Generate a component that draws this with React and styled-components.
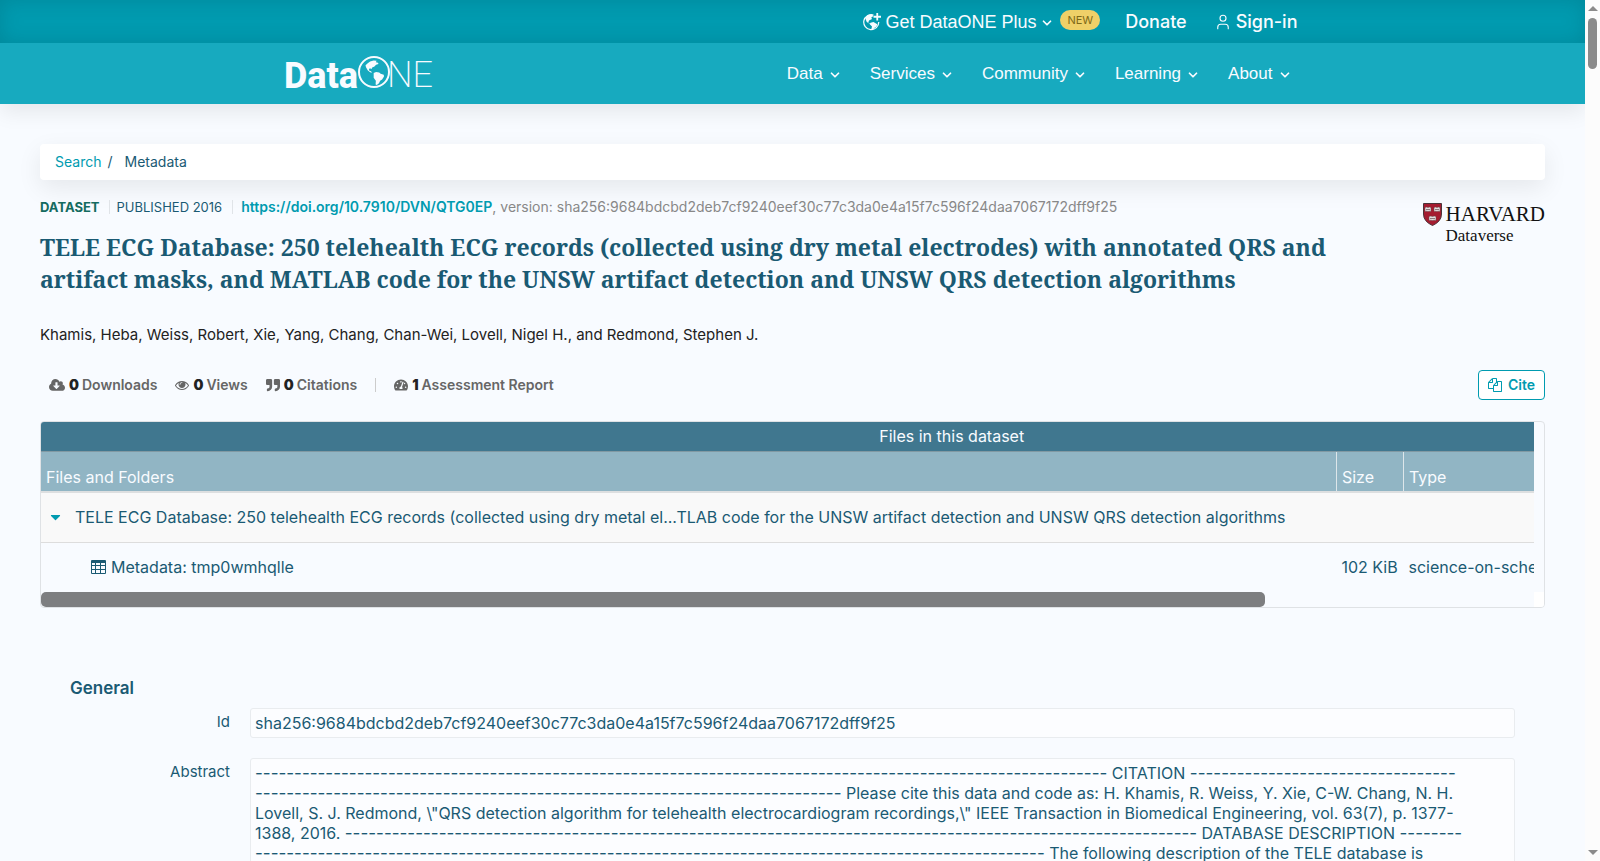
import React from "react";
import styled, { createGlobalStyle } from "styled-components";
import { ChevronDown, User } from "lucide-react";
import { FaCaretDown, FaQuoteRight, FaTachometerAlt } from "react-icons/fa";

const DASHES = "-".repeat(109);

const menus = ["Data", "Services", "Community", "Learning", "About"];

const Continents = () => (
  <>
    <path d="M6.2 4.6 8.4 3l3-1 2.4.3-.6 1.2 1.8.4.4 1.2-2 .6-1.6 1.6-1.4.4-.8 1.4-1.4-.6-.8 1 .4 1.2 1.4.4.8 1.2-1.6-.4-2-1.6-1.4-2.6-.4-1.6z" />
    <path d="M11.4 12.4l2-.8 2.6.4 1.2 1.2 2.6.8.2 1.4-1.6 2.6-1.6 1-1 2-1.8 1.4-1-.4.2-3-1.8-2.6z" />
  </>
);

const Logo = () => (
  <LogoSvg viewBox="0 0 150 36" role="img" aria-label="DataONE">
    <LogoData x="-2" y="34">Data</LogoData>
    <circle cx="88" cy="18" r="15" fill="none" stroke="currentColor" strokeWidth="2" />
    <g transform="translate(74 4) scale(1.2)">
      <Continents />
    </g>
    <LogoNe x="101" y="33">NE</LogoNe>
  </LogoSvg>
);

const GlobePlus = () => (
  <svg width="18" height="18" viewBox="0 0 24 24" fill="currentColor" aria-hidden="true">
    <path
      d="M14 2.6A10 10 0 1 0 21 12"
      fill="none"
      stroke="currentColor"
      strokeWidth="1.600"
    />
    <path d="M3 7l3-4 6-1 2 2-3 2 1 2-4 2-1 3 3 1v1L5 12z" />
    <path d="M10 13l4-1 5 3-1 3-3 2-2 3-2-1 1-4-3-3z" />
    <path d="M19 0v10M14 5h10" stroke="currentColor" strokeWidth="2.4" />
  </svg>
);

const CloudIcon = () => (
  <svg width="16" height="15" viewBox="-64 0 1920 1792" fill="currentColor" aria-hidden="true">
    <path d="M1216 928q0-14-9-23t-23-9h-224v-352q0-13-9.5-22.5t-22.5-9.5h-192q-13 0-22.5 9.5t-9.5 22.5v352h-224q-13 0-22.5 9.5t-9.5 22.5q0 14 9 23l352 352q9 9 23 9t23-9l351-351q10-12 10-24zm640 224q0 159-112.5 271.5t-271.5 112.5h-1088q-185 0-316.5-131.5t-131.5-316.5q0-130 70-240t188-165q-2-30-2-43 0-212 150-362t362-150q156 0 285.5 87t188.5 231q71-62 166-62 106 0 181 75t75 181q0 76-41 138 130 31 213.5 135.5t83.5 238.5z" />
  </svg>
);

const EyeIcon = () => (
  <svg width="14" height="14" viewBox="0 0 1792 1792" fill="currentColor" aria-hidden="true">
    <path d="M1664 960q-152-236-381-353 61 104 61 225 0 185-131.5 316.5t-316.5 131.5-316.5-131.5-131.5-316.5q0-121 61-225-229 117-381 353 133 205 333.5 326.5t434.5 121.5 434.5-121.5 333.5-326.5zm-720-384q0-20-14-34t-34-14q-125 0-214.5 89.5t-89.5 214.5q0 20 14 34t34 14 34-14 14-34q0-86 61-147t147-61q20 0 34-14t14-34zm848 384q0 34-20 69-140 230-376.5 368.5t-499.5 138.5-499.5-139-376.5-368q-20-35-20-69t20-69q140-229 376.5-368t499.5-139 499.5 139 376.5 368q20 35 20 69z" />
  </svg>
);

const FilesIcon = () => (
  <svg width="14" height="14" viewBox="0 0 1792 1792" fill="currentColor" aria-hidden="true">
    <path d="M1696 384q40 0 68 28t28 68v1216q0 40-28 68t-68 28h-960q-40 0-68-28t-28-68v-288h-544q-40 0-68-28t-28-68v-672q0-40 20-88t48-76l408-408q28-28 76-48t88-20h416q40 0 68 28t28 68v328q68-40 128-40h416zm-544 213l-299 299h299v-299zm-640-384l-299 299h299v-299zm196 647l316-316v-416h-384v416q0 40-28 68t-68 28h-416v640h512v-256q0-40 20-88t48-76zm956 804v-1152h-384v416q0 40-28 68t-68 28h-416v640h896z" />
  </svg>
);

const TableIcon = () => (
  <svg width="15" height="14" viewBox="0 0 15 14" fill="currentColor" aria-hidden="true">
    <path
      fillRule="evenodd"
      d="M1 0h13q1 0 1 1v12q0 1-1 1H1q-1 0-1-1V1q0-1 1-1zM1 3v2h3V3zM5 3v2h4V3zM10 3v2h4V3zM1 6v3h3V6zM5 6v3h4V6zM10 6v3h4V6zM1 10v3h3v-3zM5 10v3h4v-3zM10 10v3h4v-3z"
    />
  </svg>
);

const Shield = () => (
  <svg width="19" height="23" viewBox="0 0 19 23" aria-hidden="true">
    <path d="M.5.5h18V11q0 7.500-9 11.500Q.5 18.500.5 11z" fill="#a51c30" stroke="#4b3338" />
    <g fill="#e6dfe0" stroke="#62484c" strokeWidth=".5">
      <path d="M2 4.500q1.500-.8 3 0 1.500-.8 3 0v4q-1.500-.6-3 0-1.500-.6-3 0z" />
      <path d="M11 4.500q1.500-.8 3 0 1.500-.8 3 0v4q-1.500-.6-3 0-1.500-.6-3 0z" />
      <path d="M6 13.500q1.700-.8 3.500 0 1.700-.8 3.500 0v4q-1.800-.6-3.500 0-1.800-.6-3.500 0z" />
    </g>
    <path d="M3 6.500h4M12 6.500h4M7 15.500h5" stroke="#8d7c7f" />
  </svg>
);

const App = () => {
  return (
    <>
      <GlobalStyle />
      <Shell>
        <Page>
          <Header>
            <TopBar>
              <Container $end>
                <PlusButton type="button">
                  <GlobePlus />
                  Get DataONE Plus
                  <ChevronDown size={14} strokeWidth={3} />
                </PlusButton>
                <NewBadge>NEW</NewBadge>
                <TopLink href="#donate">Donate</TopLink>
                <TopLink href="#signin">
                  <User size={18} strokeWidth={1.500} />
                  Sign-in
                </TopLink>
              </Container>
            </TopBar>
            <NavBar>
              <Container>
                <LogoLink href="#home">
                  <Logo />
                </LogoLink>
                <Nav>
                  {menus.map((name) => (
                    <NavButton type="button" key={name}>
                      {name}
                      <ChevronDown size={14} strokeWidth={3} />
                    </NavButton>
                  ))}
                </Nav>
              </Container>
            </NavBar>
          </Header>

          <Main>
            <Breadcrumb aria-label="Breadcrumb">
              <Link href="#search">Search</Link>
              <span>/</span>
              <Crumb>Metadata</Crumb>
            </Breadcrumb>

            <Intro>
              <IntroText>
                <MetaLine>
                  <Kind>DATASET</Kind>
                  <Published>PUBLISHED 2016</Published>
                  <Identifier>
                    <Doi href="#doi">https://doi.org/10.7910/DVN/QTG0EP</Doi>, version:
                    sha256:9684bdcbd2deb7cf9240eef30c77c3da0e4a15f7c596f24daa7067172dff9f25
                  </Identifier>
                </MetaLine>
                <Title>
                  TELE ECG Database: 250 telehealth ECG records (collected using dry metal
                  electrodes) with annotated QRS and artifact masks, and MATLAB code for the
                  UNSW artifact detection and UNSW QRS detection algorithms
                </Title>
              </IntroText>
              <Harvard href="#harvard">
                <Shield />
                <HarvardName>
                  HARVARD
                  <Dataverse>Dataverse</Dataverse>
                </HarvardName>
              </Harvard>
            </Intro>

            <Authors>
              Khamis, Heba, Weiss, Robert, Xie, Yang, Chang, Chan-Wei, Lovell, Nigel H., and
              Redmond, Stephen J.
            </Authors>

            <Controls>
              <Stats>
                <Stat>
                  <CloudIcon />
                  <Count>0</Count>Downloads
                </Stat>
                <Stat>
                  <EyeIcon />
                  <Count>0</Count>Views
                </Stat>
                <Stat>
                  <FaQuoteRight />
                  <Count>0</Count>Citations
                </Stat>
                <Divider />
                <Stat>
                  <FaTachometerAlt />
                  <Count>1</Count>Assessment Report
                </Stat>
              </Stats>
              <CiteButton type="button">
                <FilesIcon />
                Cite
              </CiteButton>
            </Controls>

            <FilesBox>
              <FilesScroll>
                <FilesTable>
                  <colgroup>
                    <col />
                    <SizeCol />
                    <TypeCol />
                  </colgroup>
                  <thead>
                    <tr>
                      <Caption colSpan={3}>Files in this dataset</Caption>
                    </tr>
                    <tr>
                      <HeadCell>Files and Folders</HeadCell>
                      <HeadCell>Size</HeadCell>
                      <HeadCell>Type</HeadCell>
                    </tr>
                  </thead>
                  <tbody>
                    <FileRow $folder>
                      <td>
                        <FileName>
                          <Toggle type="button" aria-label="Collapse folder">
                            <FaCaretDown />
                          </Toggle>
                          TELE ECG Database: 250 telehealth ECG records (collected using dry metal
                          el...TLAB code for the UNSW artifact detection and UNSW QRS detection
                          algorithms
                        </FileName>
                      </td>
                      <td />
                      <td />
                    </FileRow>
                    <FileRow>
                      <td>
                        <FileName $nested>
                          <TableIcon />
                          Metadata: tmp0wmhqlle
                        </FileName>
                      </td>
                      <td>102 KiB</td>
                      <td>science-on-schema.org</td>
                    </FileRow>
                  </tbody>
                </FilesTable>
              </FilesScroll>
              <Track>
                <TrackThumb />
              </Track>
            </FilesBox>

            <Section>
              <SectionTitle>General</SectionTitle>
              <Fields>
                <dt>Id</dt>
                <Value>sha256:9684bdcbd2deb7cf9240eef30c77c3da0e4a15f7c596f24daa7067172dff9f25</Value>
                <dt>Abstract</dt>
                <Value>
                  <Line>
                    <Rule>{DASHES}</Rule> CITATION <Rule>{DASHES.slice(0, 34)}</Rule>
                  </Line>
                  <Line>
                    <Rule>{DASHES.slice(34)}</Rule> Please cite this data and code as: H. Khamis,
                    R. Weiss, Y. Xie, C-W. Chang, N. H.
                  </Line>
                  <Line>
                    Lovell, S. J. Redmond, \"QRS detection algorithm for telehealth
                    electrocardiogram recordings,\" IEEE Transaction in Biomedical Engineering,
                    vol. 63(7), p. 1377-
                  </Line>
                  <Line>
                    1388, 2016. <Rule>{DASHES}</Rule> DATABASE DESCRIPTION{" "}
                    <Rule>{DASHES.slice(0, 8)}</Rule>
                  </Line>
                  <Line>
                    <Rule>{DASHES.slice(8)}</Rule> The following description of the TELE database
                    is
                  </Line>
                </Value>
              </Fields>
            </Section>
          </Main>
        </Page>

        <PageScroll aria-hidden="true">
          <Arrow $up />
          <PageThumb />
          <Arrow />
        </PageScroll>
      </Shell>
    </>
  );
};

export default App;

const GlobalStyle = createGlobalStyle`
  * {
    box-sizing: border-box;
  }

  body {
    margin: 0;
    background: #f8fbff;
    color: #1a5a73;
    font: 16px/20px Inter, sans-serif;
  }

  button {
    padding: 0;
    border: none;
    background: none;
    color: inherit;
    font: inherit;
    cursor: pointer;
  }

  a {
    text-decoration: none;
  }
`;

const Shell = styled.div`
  display: flex;
  height: 100vh;
  overflow: hidden;
`;

const Page = styled.div`
  flex: 1;
  min-width: 0;
  overflow: hidden;
`;

const Header = styled.header`
  color: #f8fbff;
  box-shadow: 0 8px 20px rgba(0, 0, 0, 0.08);
`;

const TopBar = styled.div`
  display: flex;
  height: 43px;
  background: #009bb0;
  box-shadow: inset 0 0 20px rgba(0, 60, 70, 0.2);
`;

const NavBar = styled.div`
  display: flex;
  height: 61px;
  background: #17aabf;
`;

const Container = styled.div`
  display: flex;
  align-items: center;
  justify-content: ${(props) => (props.$end ? "flex-end" : "space-between")};
  width: 100%;
  max-width: 1014px;
  margin: 0 auto;
  padding-right: 2px;
`;

const PlusButton = styled.button`
  display: flex;
  align-items: center;
  gap: 4px;
  font: 18px/20px "Liberation Sans", sans-serif;

  svg:last-child {
    margin-top: 3px;
  }
`;

const NewBadge = styled.span`
  margin: 0 25px 4px 6px;
  padding: 0 7px;
  border-radius: 10px;
  background: #efd068;
  color: #7d6816;
  font-size: 11px;
`;

const TopLink = styled.a`
  display: flex;
  align-items: center;
  gap: 4px;
  color: inherit;
  font-size: 18px;
  font-weight: 500;

  & + & {
    margin-left: 27px;
  }
`;

const LogoLink = styled.a`
  display: flex;
  margin-bottom: 4px;
  color: #f8fbff;
`;

const LogoSvg = styled.svg`
  width: 150px;
  height: 36px;
  fill: currentColor;
  overflow: visible;
`;

const LogoData = styled.text`
  font: 800 36px Roboto, sans-serif;
`;

const LogoNe = styled.text`
  font: 200 36px Roboto, sans-serif;
`;

const Nav = styled.nav`
  display: flex;
  gap: 28px;
  padding-right: 6px;
`;

const NavButton = styled.button`
  display: flex;
  align-items: center;
  gap: 5px;
  font: 17px/20px "Liberation Sans", sans-serif;

  svg {
    margin-top: 3px;
  }
`;

const Main = styled.main`
  padding: 40px;
`;

const Breadcrumb = styled.nav`
  display: flex;
  gap: 6px;
  padding: 8px 15px;
  border-radius: 4px;
  background: #fff;
  box-shadow: 0 8px 24px rgba(0, 0, 0, 0.08);
  font-size: 14px;
`;

const Link = styled.a`
  color: #009bb0;
`;

const Crumb = styled.span`
  margin-left: 6px;
`;

const Intro = styled.div`
  display: flex;
  gap: 40px;
  justify-content: space-between;
  padding-top: 17px;
`;

const IntroText = styled.div`
  flex: 1;
`;

const MetaLine = styled.div`
  display: flex;
  color: #888;
  font-size: 13px;
`;

const Kind = styled.span`
  padding-right: 9px;
  color: #146b60;
  font-weight: 700;
`;

const Published = styled.span`
  margin: 3px 8px 3px 0;
  padding: 0 10px 0 7px;
  border: solid #e0e4e8;
  border-width: 0 1px;
  color: #1a5a73;
  line-height: 14px;
`;

const Identifier = styled.span`
  font-size: 14px;
`;

const Doi = styled.a`
  color: #009bb0;
  font-weight: 600;
`;

const Title = styled.h1`
  margin: 14px 0 0;
  font: 700 23px/32px "Noto Serif", "DejaVu Serif", serif;
`;

const Harvard = styled.a`
  display: flex;
  gap: 4px;
  padding-top: 6px;
  color: #111;
  font-family: "Liberation Serif", serif;
`;

const HarvardName = styled.span`
  display: flex;
  flex-direction: column;
  font-size: 21px;
  font-weight: 500;
  line-height: 22px;
`;

const Dataverse = styled.span`
  font-size: 17px;
`;

const Authors = styled.p`
  margin: 30px 0 25px;
  color: #222;
  font-size: 15px;
`;

const Controls = styled.div`
  display: flex;
  align-items: center;
  justify-content: space-between;
`;

const Stats = styled.div`
  display: flex;
  align-items: center;
  gap: 18px;
  padding-left: 9px;
`;

const Stat = styled.span`
  display: flex;
  align-items: center;
  color: #666;
  font-size: 14px;
  font-weight: 600;
`;

const Count = styled.b`
  margin: 0 3px 0 4px;
  color: #222;
`;

const Divider = styled.span`
  width: 1px;
  height: 14px;
  background: #ccc;
`;

const CiteButton = styled.button`
  display: flex;
  align-items: center;
  gap: 6px;
  height: 30px;
  padding: 0 9px;
  border: 1px solid #009bb0;
  border-radius: 4px;
  background: #fff;
  color: #009bb0;
  font-size: 14px;
  font-weight: 600;
`;

const FilesBox = styled.div`
  margin-top: 21px;
  padding-right: 10px;
  overflow: hidden;
  border: 1px solid #dfe2e5;
  border-radius: 4px;
`;

const FilesScroll = styled.div`
  overflow: hidden;
`;

const FilesTable = styled.table`
  width: 122%;
  table-layout: fixed;
  border-collapse: collapse;
  white-space: nowrap;

  td {
    height: 50px;
    padding: 0 5px;
  }
`;

const SizeCol = styled.col`
  width: 67px;
`;

const TypeCol = styled.col`
  width: 459px;
`;

const Caption = styled.th`
  height: 29px;
  padding: 0;
  border-bottom: 1px solid #8199a3;
  background: #40778f;
  color: #f8fbff;
  font-weight: 400;
`;

const HeadCell = styled.th`
  height: 41px;
  padding: 0 5px 4px;
  border-bottom: 2px solid #dddfe0;
  background: #91b5c4;
  color: #f8fbff;
  font-weight: 400;
  text-align: left;
  vertical-align: bottom;

  & + & {
    border-left: 1px solid #dde6ea;
  }
`;

const FileRow = styled.tr`
  background: ${(props) => (props.$folder ? "#f9f9f9" : "transparent")};

  & + & {
    border-top: 1px solid #ddd;
  }
`;

const FileName = styled.span`
  display: flex;
  align-items: center;
  gap: ${(props) => (props.$nested ? "5px" : "13px")};
  padding-left: ${(props) => (props.$nested ? "45px" : "3px")};
`;

const Toggle = styled.button`
  display: flex;
  width: 13px;
  justify-content: center;
  color: #009bb0;
`;

const Track = styled.div`
  height: 15px;
  margin-right: -10px;
  padding-right: 10px;
  background: linear-gradient(to left, #fff 10px, transparent 10px);
`;

const TrackThumb = styled.div`
  width: 82%;
  height: 15px;
  border-radius: 5px;
  background: #7d7e80;
`;

const Section = styled.section`
  padding: 70px 30px 0;
`;

const SectionTitle = styled.h2`
  margin: 0;
  font-size: 17px;
  font-weight: 600;
  line-height: 20px;
`;

const Fields = styled.dl`
  display: grid;
  grid-template-columns: 160px 1fr;
  gap: 20px;
  margin: 10px 0 0;

  dt {
    padding-top: 4px;
    font-size: 15px;
    text-align: right;
  }
`;

const Value = styled.dd`
  min-width: 0;
  margin: 0;
  padding: 4px;
  border: 1px solid #e9ecef;
  border-radius: 3px;
  background: #fcfdff;
`;

const Line = styled.div`
  white-space: nowrap;
`;

const Rule = styled.span`
  font-size: 17px;
`;

const PageScroll = styled.div`
  display: flex;
  flex-direction: column;
  align-items: center;
  width: 15px;
  padding: 6px 0;
  background: #fcfcfc;
`;

const Arrow = styled.span`
  border: solid transparent;
  border-width: 0 5px;
  ${(props) =>
    props.$up
      ? "border-bottom: 5px solid #8b8b8b; margin-bottom: 7px;"
      : "border-top: 5px solid #8b8b8b; margin-top: auto;"}
`;

const PageThumb = styled.div`
  width: 9px;
  height: 51px;
  border-radius: 5px;
  background: #8b8b8b;
`;
